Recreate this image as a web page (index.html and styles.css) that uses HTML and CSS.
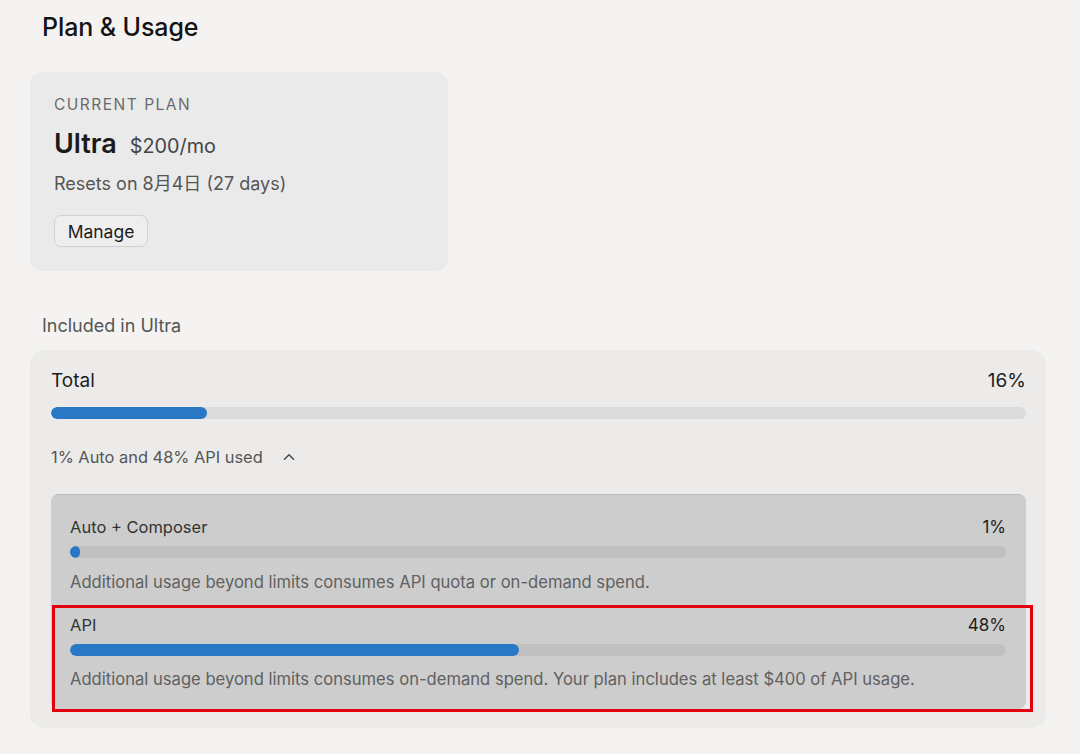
FILE: index.html
```html
<!DOCTYPE html>
<html lang="en">
<head>
<meta charset="utf-8">
<title>Plan &amp; Usage</title>
<link rel="stylesheet" href="styles.css">
</head>
<body>
<main class="page">
  <h1 class="title">Plan &amp; Usage</h1>

  <section class="plan-card">
    <div class="plan-label">CURRENT PLAN</div>
    <div class="plan-name-row">
      <span class="plan-name">Ultra</span>
      <span class="plan-price">$200/mo</span>
    </div>
    <div class="plan-reset">Resets on 8月4日 (27 days)</div>
    <button class="manage-btn" type="button">Manage</button>
  </section>

  <h2 class="section-label">Included in Ultra</h2>

  <section class="usage-card">
    <div class="usage-head">
      <span class="usage-title">Total</span>
      <span class="usage-pct">16%</span>
    </div>
    <div class="track"><div class="fill" style="width:16%"></div></div>

    <div class="summary">
      <span>1% Auto and 48% API used</span>
      <svg class="chevron" width="12" height="8" viewBox="0 0 12 8" aria-hidden="true">
        <path d="M1.5 6.3 L6 1.8 L10.5 6.3" fill="none" stroke="#4a4a4a" stroke-width="1.5" stroke-linecap="round" stroke-linejoin="round"/>
      </svg>
    </div>

    <div class="breakdown">
      <div class="item item-first">
        <div class="item-head">
          <span class="item-title">Auto + Composer</span>
          <span class="item-pct">1%</span>
        </div>
        <div class="track track-dark"><div class="fill fill-min" style="width:1%"></div></div>
        <p class="item-desc">Additional usage beyond limits consumes API quota or on-demand spend.</p>
      </div>
      <div class="item item-highlight">
        <div class="item-head">
          <span class="item-title">API</span>
          <span class="item-pct">48%</span>
        </div>
        <div class="track track-dark"><div class="fill" style="width:48%"></div></div>
        <p class="item-desc">Additional usage beyond limits consumes on-demand spend. Your plan includes at least $400 of API usage.</p>
      </div>
    </div>
  </section>
</main>
</body>
</html>
```

FILE: styles.css
```css
* { box-sizing: border-box; }

html, body {
  margin: 0;
  padding: 0;
  background: #f4f3f2;
}

body {
  font-family: Inter, "Noto Sans", "Noto Sans CJK JP", sans-serif;
  color: #1d1d1d;
}

.page {
  width: 1080px;
  height: 754px;
  padding: 12px 34px 0 30px;
  overflow: hidden;
}

.title {
  margin: 0 0 0 12px;
  font-size: 25px;
  line-height: 30px;
  font-weight: 500;
  color: #141414;
  letter-spacing: -0.1px;
}

.plan-card {
  margin-top: 30px;
  width: 418px;
  height: 199px;
  background: #ebeaea;
  border-radius: 12px;
  padding: 24px 24px 0;
}

.plan-label {
  font-size: 15.5px;
  line-height: 18px;
  letter-spacing: 1.5px;
  color: #6a6a6a;
}

.plan-name-row {
  display: flex;
  align-items: baseline;
  gap: 13px;
  margin-top: 14px;
  height: 32px;
}

.plan-name {
  font-size: 27px;
  line-height: 32px;
  font-weight: 600;
  color: #1a1a1a;
}

.plan-price {
  font-size: 19.8px;
  color: #444;
}

.plan-reset {
  margin-top: 12px;
  font-size: 18px;
  line-height: 24px;
  color: #555;
}

.manage-btn {
  margin-top: 19px;
  height: 32px;
  width: 94px;
  padding: 0;
  font-family: inherit;
  font-size: 17.5px;
  color: #1d1d1d;
  background: #efeeee;
  border: 1px solid #d2d1d1;
  border-radius: 7px;
}

.section-label {
  margin: 44px 0 0 12px;
  font-size: 18px;
  line-height: 22px;
  font-weight: 400;
  color: #555;
}

.usage-card {
  margin-top: 13px;
  width: 1016px;
  background: #ecebea;
  border-radius: 14px;
  padding: 19px 20px 19px 21px;
}

.usage-head, .item-head {
  display: flex;
  justify-content: space-between;
  align-items: baseline;
}

.usage-title, .usage-pct {
  font-size: 19px;
  line-height: 24px;
  color: #1d1d1d;
}

.track {
  margin-top: 14px;
  height: 12px;
  border-radius: 6px;
  background: #dcdbdb;
  overflow: hidden;
}

.track-dark { background: #c0c0c0; margin-top: 8px; }

.fill {
  height: 100%;
  border-radius: 6px;
  background: #2878c6;
}

.fill-min { min-width: 10px; }

.summary {
  margin-top: 27px;
  display: flex;
  align-items: center;
  gap: 20px;
  font-size: 16.4px;
  line-height: 22px;
  color: #555;
}

.chevron { margin-top: -1px; }

.breakdown {
  margin-top: 26px;
  background: #cdcdcd;
  border-top: 1px solid #bdbdbd;
  border-radius: 8px;
  padding: 0 20px 0 19px;
}

.item-first {
  padding-top: 21px;
  height: 110px;
}

.item-highlight {
  position: relative;
  padding-top: 9px;
  height: 104px;
}

.item-highlight::after {
  content: "";
  position: absolute;
  left: -18px;
  right: -27px;
  top: 0;
  bottom: -3px;
  border: 3px solid #e5000f;
  pointer-events: none;
}

.item-title, .item-pct {
  font-size: 16.5px;
  line-height: 22px;
  color: #333;
}

.item-pct { font-size: 17px; color: #1d1d1d; }

.item-desc {
  margin: 13px 0 0;
  font-size: 16.6px;
  line-height: 22px;
  color: #616161;
}

.item-highlight .item-desc { margin-top: 12px; }
```
